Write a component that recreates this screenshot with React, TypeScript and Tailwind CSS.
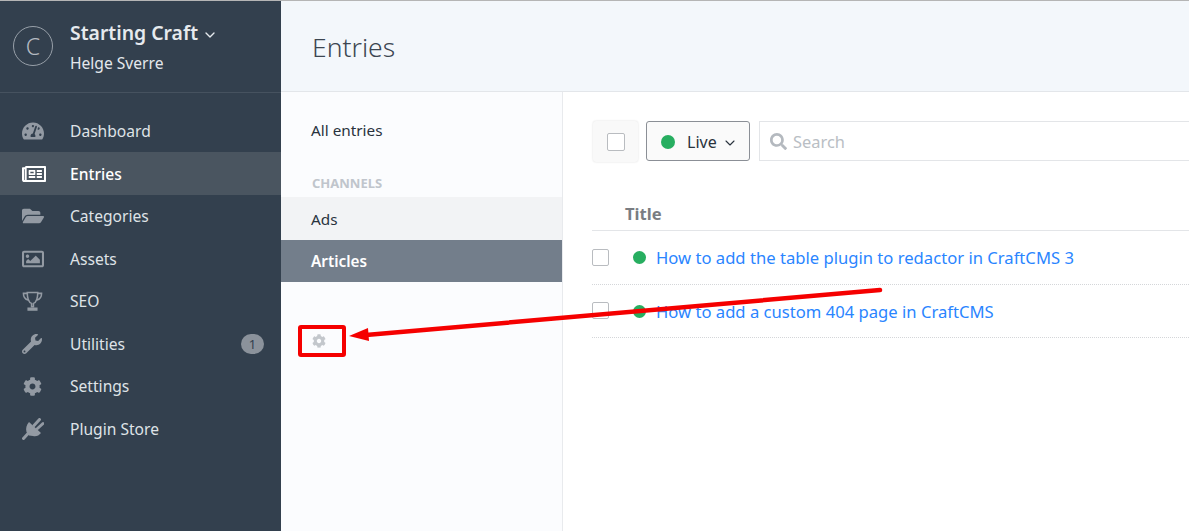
import React from 'react';
import { FaCog, FaFolderOpen, FaRegImage, FaRegNewspaper, FaSearch, FaTachometerAlt, FaWrench } from 'react-icons/fa';
import { ChevronDown } from 'lucide-react';

const TrophyIcon = ({ className }: { className?: string }) => (
  <svg viewBox="0 0 22 22" className={className} fill="none" stroke="currentColor" strokeWidth="1.6">
    <path d="M5.5 1.5h11c0 6-1 10-4.500 11.500v3.500h-2V13C6.500 11.500 5.500 7.500 5.500 1.500z" fill="none" />
    <path d="M5.500 2.500H1.500c0 3.500 1.500 6 5 7M16.500 2.500h4c0 3.500-1.500 6-5 7" />
    <path d="M6.500 18h9v2h-9z" fill="currentColor" />
  </svg>
);

const PlugIcon = ({ className }: { className?: string }) => (
  <svg viewBox="0 0 22 22" className={className} fill="currentColor">
    <path d="M7 4 L19 15 C17 17.500 14 19 11 18 L7 17.500 L4.500 14 C3.500 10.500 4.500 6.500 7 4z" />
    <path d="M12 7.500 L17.500 1.500 M15.500 10.500 L21 5.500" stroke="currentColor" strokeWidth="3" strokeLinecap="round" />
    <path d="M6.500 15 L1.500 20.500" stroke="currentColor" strokeWidth="3" strokeLinecap="round" />
  </svg>
);

const navItems = [
  { label: 'Dashboard', icon: <FaTachometerAlt className="w-[22px] h-[22px]" /> },
  { label: 'Entries', icon: <FaRegNewspaper className="w-[24px] h-[24px]" />, active: true },
  { label: 'Categories', icon: <FaFolderOpen className="w-[22px] h-[22px]" /> },
  { label: 'Assets', icon: <FaRegImage className="w-[22px] h-[22px]" /> },
  { label: 'SEO', icon: <TrophyIcon className="w-[21px] h-[21px]" /> },
  { label: 'Utilities', icon: <FaWrench className="w-[20px] h-[20px]" />, badge: '1' },
  { label: 'Settings', icon: <FaCog className="w-[19px] h-[19px] ml-px" /> },
  { label: 'Plugin Store', icon: <PlugIcon className="w-[22px] h-[22px]" /> },
];

const entries = [
  'How to add the table plugin to redactor in CraftCMS 3',
  'How to add a custom 404 page in CraftCMS',
];

function Sidebar() {
  return (
    <aside className="w-[281px] shrink-0 bg-[#33404e] text-[#e4e8ec]">
      <div className="h-[92px] border-b border-[#46525f] flex items-start pl-[13px] pt-[25px]">
        <div className="w-10 h-10 rounded-full border border-[#98a0a9] flex items-center justify-center text-[#b4bac1] text-[23px] font-light">
          C
        </div>
        <div className="ml-[17px]">
          <div className="flex items-center text-[19.400px] leading-[20px] font-semibold -mt-[3px] text-[#e6eaee]">
            Starting Craft
            <ChevronDown className="w-4 h-4 ml-[4px] mt-[3px]" strokeWidth={2} />
          </div>
          <div className="text-[15.600px] leading-[20px] mt-[10px]">Helge Sverre</div>
        </div>
      </div>
      <nav className="pt-[16.900px]">
        {navItems.map((item) => (
          <div
            key={item.label}
            className={`h-[42.5px] flex items-center pl-[22px] pr-[17px] text-[15.600px] leading-[22.100px] ${
              item.active ? 'bg-[#4a5560] text-white font-medium' : 'text-[#dfe3e7]'
            }`}
          >
            <span className={`w-[48px] flex items-center ${item.active ? 'text-white' : 'text-[#939aa3]'}`}>
              {item.icon}
            </span>
            <span className="flex-1">{item.label}</span>
            {item.badge && (
              <span className="w-[23px] h-[20px] rounded-full bg-[#8b929b] text-[#33404e] text-[13px] flex items-center justify-center">
                {item.badge}
              </span>
            )}
          </div>
        ))}
      </nav>
    </aside>
  );
}

function Sources() {
  return (
    <div className="w-[282px] shrink-0 bg-[#fbfcfe] border-r border-[#e8eaed] text-[15.300px] text-[#29323d]">
      <div className="pl-[30px] pt-[28px] leading-[20px]">All entries</div>
      <div className="pl-[31px] pt-[35px] text-[13px] leading-[16px] font-bold text-[#c0c5cc]">CHANNELS</div>
      <div className="mt-[6px] h-[43px] bg-[#f2f3f5] pl-[30px] pt-px flex items-center">Ads</div>
      <div className="h-[42px] bg-[#737e8b] pl-[30px] flex items-center font-semibold text-white">Articles</div>
      <div className="ml-[17px] mt-[43px] w-[48px] h-[32px] border-4 border-[#f50000] rounded-[3px] flex items-center pl-[10px]">
        <FaCog className="w-[14px] h-[14px] text-[#c3c7cc]" />
      </div>
    </div>
  );
}

function EntriesTable() {
  return (
    <div className="flex-1 bg-white pl-[29px] pt-[29px] overflow-hidden">
      <div className="flex items-start">
        <div className="ml-px w-[45px] h-[41px] bg-[#f9f9f9] rounded-[3px] shadow-[0_0_2px_rgba(0,0,0,0.15)] flex items-center justify-center">
          <div className="w-[18px] h-[18px] border border-[#b9bcc0] rounded-[2px] bg-white" />
        </div>
        <div className="ml-[8px] w-[104px] h-[40px] rounded-[3px] border border-[#8b8f96] bg-[#fafafa] flex items-center pl-[14px] pt-px text-[16px] text-[#29323d]">
          <span className="w-[14px] h-[14px] rounded-full bg-[#27ae60]" />
          <span className="ml-[12px]">Live</span>
          <ChevronDown className="w-[16px] h-[16px] ml-[5px] mt-[3px]" strokeWidth={1.6} />
        </div>
        <div className="ml-[9px] flex-1 h-[40px] border border-[#e3e5e8] border-r-0 flex items-center pl-[10px] text-[16.400px] text-[#b9bec4]">
          <FaSearch className="w-[17px] h-[17px] text-[#b4b9bf]" />
          <span className="ml-[6px] mt-[2px]">Search</span>
        </div>
      </div>
      <div className="mt-[29px] h-[40px] pl-[33px] pt-[11px] border-b border-[#e3e5e8] text-[16.600px] font-bold text-[#7a7d82] leading-[24px]">
        Title
      </div>
      {entries.map((title) => (
        <div key={title} className="h-[53.500px] flex items-center border-b border-dotted border-[#d4d6d9]">
          <div className="w-[17px] h-[17px] border border-[#b9bcc0] rounded-[2px] bg-white" />
          <span className="ml-[24px] mt-px w-[13px] h-[13px] rounded-full bg-[#27ae60]" />
          <a className="ml-[10px] mt-[3px] text-[16.640px] text-[#2a85ff]">{title}</a>
        </div>
      ))}
    </div>
  );
}

export default function App() {
  return (
    <div className="relative h-[531px] w-[1189px] overflow-hidden flex flex-col font-['Noto_Sans',sans-serif] bg-white">
      <div className="h-px bg-[#b5b5b5] shrink-0" />
      <div className="flex flex-1 min-h-0">
        <Sidebar />
        <div className="flex-1 flex flex-col min-w-0">
          <header className="h-[91px] shrink-0 bg-[#f3f7fb] border-b border-[#e3e6ea] pl-[31px] pt-[27px] text-[26.500px] leading-[38px] font-light text-[#3c4651]">
            Entries
          </header>
          <div className="flex flex-1 min-h-0">
            <Sources />
            <EntriesTable />
          </div>
        </div>
      </div>
      {/* annotation arrow on top of the screenshot */}
      <svg className="absolute inset-0 pointer-events-none" width="1189" height="531" viewBox="0 0 1189 531">
        <path d="M880 290 L366 335" stroke="#f50000" strokeWidth="4.500" strokeLinecap="round" fill="none" />
        <path d="M349 336 L368 328 L369 341 Z" fill="#f50000" />
      </svg>
    </div>
  );
}
